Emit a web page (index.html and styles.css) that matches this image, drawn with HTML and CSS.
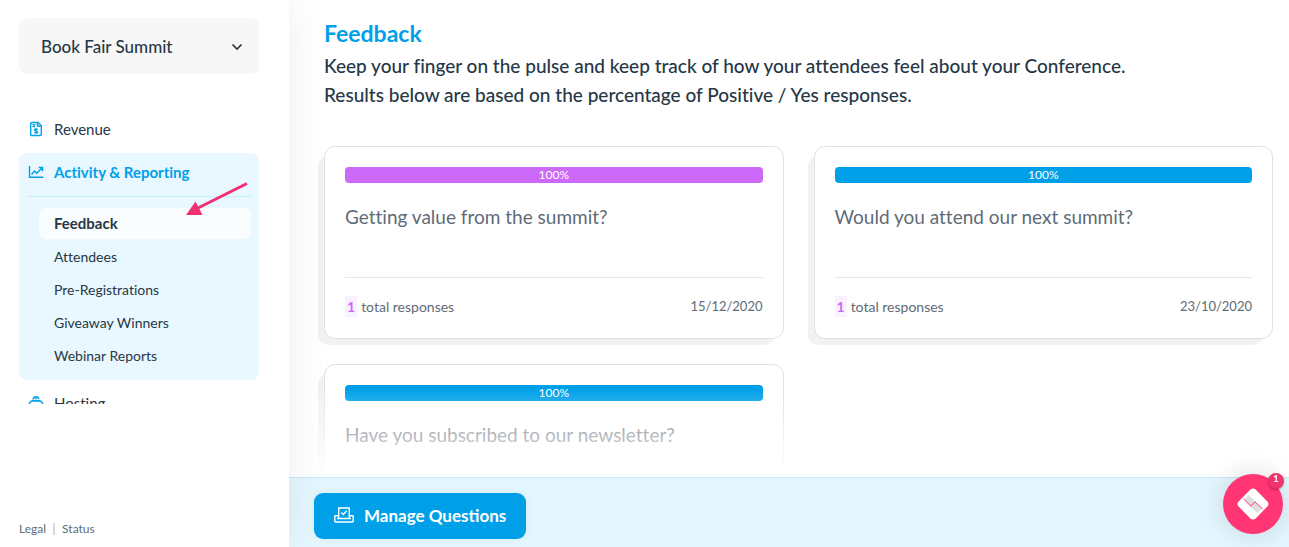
FILE: index.html
```
<!DOCTYPE html>
<html lang="en">
<head>
  <meta charset="UTF-8" />
  <meta name="viewport" content="width=device-width, initial-scale=1.0"/>
  <title>Feedback - Book Fair Summit</title>
  <link rel="stylesheet" href="styles.css">
</head>
<body>
  <aside class="sidebar">
    <div class="switcher">
      <select id="event" name="event" aria-label="Event">
        <option selected>Book Fair Summit</option>
      </select>
      <svg class="chevron" viewBox="0 0 12 8" aria-hidden="true"><path d="M1.5 1.5 6 6l4.500-4.500"/></svg>
    </div>

    <nav class="menu">
      <a href="#" class="menu-link">
        <svg class="icon" viewBox="0 0 16 16" aria-hidden="true">
          <path d="M3.700 1.500h6.300l3.300 3.300v8.700a1 1 0 0 1-1 1H3.700a1 1 0 0 1-1-1v-11a1 1 0 0 1 1-1z"/>
          <path d="M9.500 1.500v3.500h3.500M4.500 3.600h3M4.500 5.500h2.500"/>
          <path d="M9.700 8.500C9.200 7.900 6.400 7.500 6.400 8.900c0 1.300 3.400.700 3.400 2.100 0 1.400-3 1.100-3.500.4M8.100 7.200v5.500"/>
        </svg>
        Revenue
      </a>

      <div class="menu-group">
        <a href="#" class="menu-link active">
          <svg class="icon" viewBox="0 0 16 16" aria-hidden="true">
            <path d="M1.500 2v11.300H15.500"/>
            <path d="M3.500 10.500 6.500 7l2.200 2.200L14 4M10.800 3.500h3.700v3.700"/>
          </svg>
          Activity &amp; Reporting
        </a>
        <div class="submenu">
          <a href="#" class="current">Feedback</a>
          <a href="#">Attendees</a>
          <a href="#">Pre-Registrations</a>
          <a href="#">Giveaway Winners</a>
          <a href="#">Webinar Reports</a>
        </div>
        <svg class="arrow" viewBox="0 0 62 34" aria-hidden="true">
          <path class="shaft" d="M61 1.500 10 27"/>
          <path class="head" d="M0 33 9.500 19.500 16.500 33z"/>
        </svg>
      </div>

      <a href="#" class="menu-link">
        <svg class="icon" viewBox="0 0 16 16" aria-hidden="true">
          <path d="M1 11c.2-3 1.500-5 3.500-5.300h7C13.500 6 14.800 8 15 11M3 6h10"/>
          <path d="M5 4.500c.2-2 1.500-2.800 3-2.800s2.700.8 2.800 2.500M7 4l1.700-1"/>
        </svg>
        Hosting
      </a>
    </nav>

    <div class="legal">
      <a href="#">Legal</a>
      <span class="bar"></span>
      <a href="#">Status</a>
    </div>
  </aside>

  <main class="main">
    <div class="content">
      <h1>Feedback</h1>
      <p class="intro">Keep your finger on the pulse and keep track of how your attendees feel about your Conference.<br>Results below are based on the percentage of Positive / Yes responses.</p>

      <div class="cards">
        <div class="card">
          <div class="track"><div class="fill purple" style="width: 100%">100%</div></div>
          <h2>Getting value from the summit?</h2>
          <div class="card-footer">
            <span><b class="count">1</b>total responses</span>
            <span class="date">15/12/2020</span>
          </div>
        </div>

        <div class="card">
          <div class="track"><div class="fill" style="width: 100%">100%</div></div>
          <h2>Would you attend our next summit?</h2>
          <div class="card-footer">
            <span><b class="count">1</b>total responses</span>
            <span class="date">23/10/2020</span>
          </div>
        </div>

        <div class="card">
          <div class="track"><div class="fill" style="width: 100%">100%</div></div>
          <h2>Have you subscribed to our newsletter?</h2>
        </div>
      </div>
    </div>

    <div class="actions">
      <button type="button" class="manage">
        <svg viewBox="0 0 20 16" aria-hidden="true">
          <path d="M4.700 11V1h10.600v10"/>
          <path d="M3 11.500h14M4 8.700H1.500a.7.7 0 0 0-.7.7v4.900c0 .4.300.7.700.7h17c.4 0 .7-.3.700-.7V9.400a.7.7 0 0 0-.7-.7H16"/>
          <path d="M7.300 5.500l2 2 3.400-3.700"/>
        </svg>
        Manage Questions
      </button>
    </div>
  </main>

  <button type="button" class="chat" aria-label="Open chat">
    <svg viewBox="0 0 34 34" aria-hidden="true">
      <rect class="tile" x="5" y="5" width="24" height="24" rx="4" transform="rotate(45 17 17)"/>
      <path class="shade" d="M8 12.500 12.800 8l6.700 6.500-4.500 4.500zM26 21.500 21.200 26l-6.700-6.500 4.500-4.500z"/>
      <path class="seam" d="M7.500 12 15 19.200l4-4.400 7.500 7.200"/>
    </svg>
    <span class="badge">1</span>
  </button>
</body>
</html>
```
FILE: styles.css
```
* {
  margin: 0;
  padding: 0;
  box-sizing: border-box;
}

body {
  display: flex;
  height: 100vh;
  overflow: hidden;
  font-family: Lato, 'Liberation Sans', sans-serif;
  font-size: 15px;
  font-variant-ligatures: none;
  color: #263746;
  background: #fff;
}

a {
  color: inherit;
  text-decoration: none;
}

svg {
  fill: none;
  stroke: currentColor;
}

/* sidebar */
.sidebar {
  position: relative;
  z-index: 2;
  display: flex;
  flex-direction: column;
  flex: none;
  width: 289px;
  padding: 18px 30px 10px 19px;
  background: #fff;
  box-shadow: 0 0 40px rgba(0,0,0,0.07);
}

.switcher {
  position: relative;
}

.switcher select {
  width: 100%;
  height: 56px;
  padding: 0 22px;
  appearance: none;
  border: none;
  border-radius: 8px;
  background: #f7f7f7;
  font: 500 17px Lato, 'Liberation Sans', sans-serif;
  color: #263746;
}

.chevron {
  position: absolute;
  top: 25px;
  right: 16px;
  width: 12px;
  height: 8px;
  stroke-width: 1.7;
  pointer-events: none;
}

.menu {
  flex: 1;
  margin: 36px 0 117px;
  overflow: hidden;
}

.menu-link {
  display: flex;
  align-items: center;
  gap: 10px;
  height: 38px;
  padding-left: 9px;
}

.icon {
  width: 16px;
  height: 16px;
  stroke-width: 1.4;
  color: #00a0e9;
}

.menu-group {
  position: relative;
  margin: 5px 0 4px;
  padding: 0 8px 9px;
  border-radius: 8px;
  background: #e9f7fe;
}

.menu-group .menu-link {
  height: 44px;
  padding: 0 0 6px 1px;
  border-bottom: 1px solid #c9eefc;
}

.active {
  font-weight: bold;
  color: #00a0e9;
}

.submenu {
  display: grid;
  gap: 2px;
  padding: 11px 0 0 12px;
}

.submenu a {
  padding-left: 15px;
  border-radius: 7px;
  font-size: 14px;
  line-height: 31px;
}

.submenu .current {
  font-size: 15px;
  font-weight: bold;
  background: #fafdfe;
}

.arrow {
  position: absolute;
  top: 29px;
  right: 11px;
  width: 62px;
  height: 34px;
}

.arrow .shaft {
  stroke: #f03070;
  stroke-width: 3;
}

.arrow .head {
  fill: #f03070;
  stroke: none;
}

.legal {
  display: flex;
  align-items: center;
  gap: 7px;
  font-size: 12px;
  line-height: 16px;
  color: #5f6b76;
}

.bar {
  width: 2px;
  height: 12px;
  background: #d8dade;
}

/* main */
.main {
  display: flex;
  flex-direction: column;
  flex: 1;
  min-width: 0;
}

.content {
  position: relative;
  z-index: 0;
  flex: 1;
  min-height: 0;
  padding: 17px 16px 0 35px;
  overflow: hidden;
}

.content::after {
  content: '';
  position: absolute;
  left: 0;
  right: 0;
  bottom: 0;
  height: 88px;
  background: linear-gradient(rgba(255,255,255,0), #fff);
}

h1 {
  font-size: 23px;
  line-height: 32px;
  color: #00a0e9;
}

.intro {
  padding-top: 2px;
  font-size: 19px;
  font-weight: 500;
  line-height: 29px;
}

.cards {
  display: grid;
  grid-template-columns: 1fr 1fr;
  gap: 25px 30px;
  margin-top: 37px;
}

.card {
  position: relative;
  height: 193px;
  padding: 20px;
  border: 1px solid #e0e1e5;
  border-radius: 11px;
  background: #fff;
}

.card::before {
  content: '';
  position: absolute;
  z-index: -1;
  top: 9px;
  left: -7px;
  right: 9px;
  bottom: -7px;
  border-radius: 10px;
  background: #f2f2f4;
}

.fill {
  height: 16px;
  border-radius: 4px;
  background: #00a0e9;
  font-size: 12px;
  line-height: 16px;
  text-align: center;
  color: #fff;
}

.purple {
  background: #cd69f9;
}

.card h2 {
  height: 95px;
  padding-top: 20px;
  border-bottom: 1px solid #e6e7ea;
  font-size: 19px;
  font-weight: normal;
  line-height: 28px;
  color: #5f6b76;
}

.card-footer {
  display: flex;
  justify-content: space-between;
  padding-top: 18px;
  font-size: 14px;
  line-height: 21px;
  color: #5f6b76;
}

.date {
  font-size: 13px;
}

.count {
  display: inline-block;
  margin-right: 4px;
  padding: 0 2px;
  background: #f9f1fe;
  color: #cd69f9;
}

.actions {
  padding: 15px 25px 8px;
  border-top: 1px solid #c3eaf9;
  background: #e4f6fe;
}

.manage {
  display: flex;
  align-items: center;
  gap: 10px;
  height: 46px;
  padding: 0 20px 2px;
  border: none;
  border-radius: 9px;
  background: #00a0e9;
  box-shadow: 0 0 10px rgba(0,0,0,0.05);
  font: bold 17px Lato, 'Liberation Sans', sans-serif;
  color: #fff;
  cursor: pointer;
}

.manage svg {
  width: 20px;
  height: 16px;
  stroke-width: 1.4;
}

/* chat launcher */
.chat {
  position: fixed;
  z-index: 3;
  right: 6px;
  bottom: 13px;
  display: grid;
  place-items: center;
  width: 60px;
  height: 60px;
  border: none;
  border-radius: 50%;
  background: #ff3574;
  box-shadow: 0 0 28px rgba(0,0,0,0.14);
  cursor: pointer;
}

.chat svg {
  width: 34px;
  height: 34px;
}

.tile {
  fill: #fff;
  stroke: none;
}

.shade {
  fill: #dedede;
  stroke: none;
}

.seam {
  stroke: #ff3574;
}

.badge {
  position: absolute;
  top: -1px;
  right: -1px;
  width: 16px;
  height: 16px;
  border-radius: 50%;
  background: #f2336d;
  box-shadow: 0 1px 2px rgba(0,0,0,0.3);
  font: bold 10px/11px Lato, sans-serif;
  color: #fff;
}
```
